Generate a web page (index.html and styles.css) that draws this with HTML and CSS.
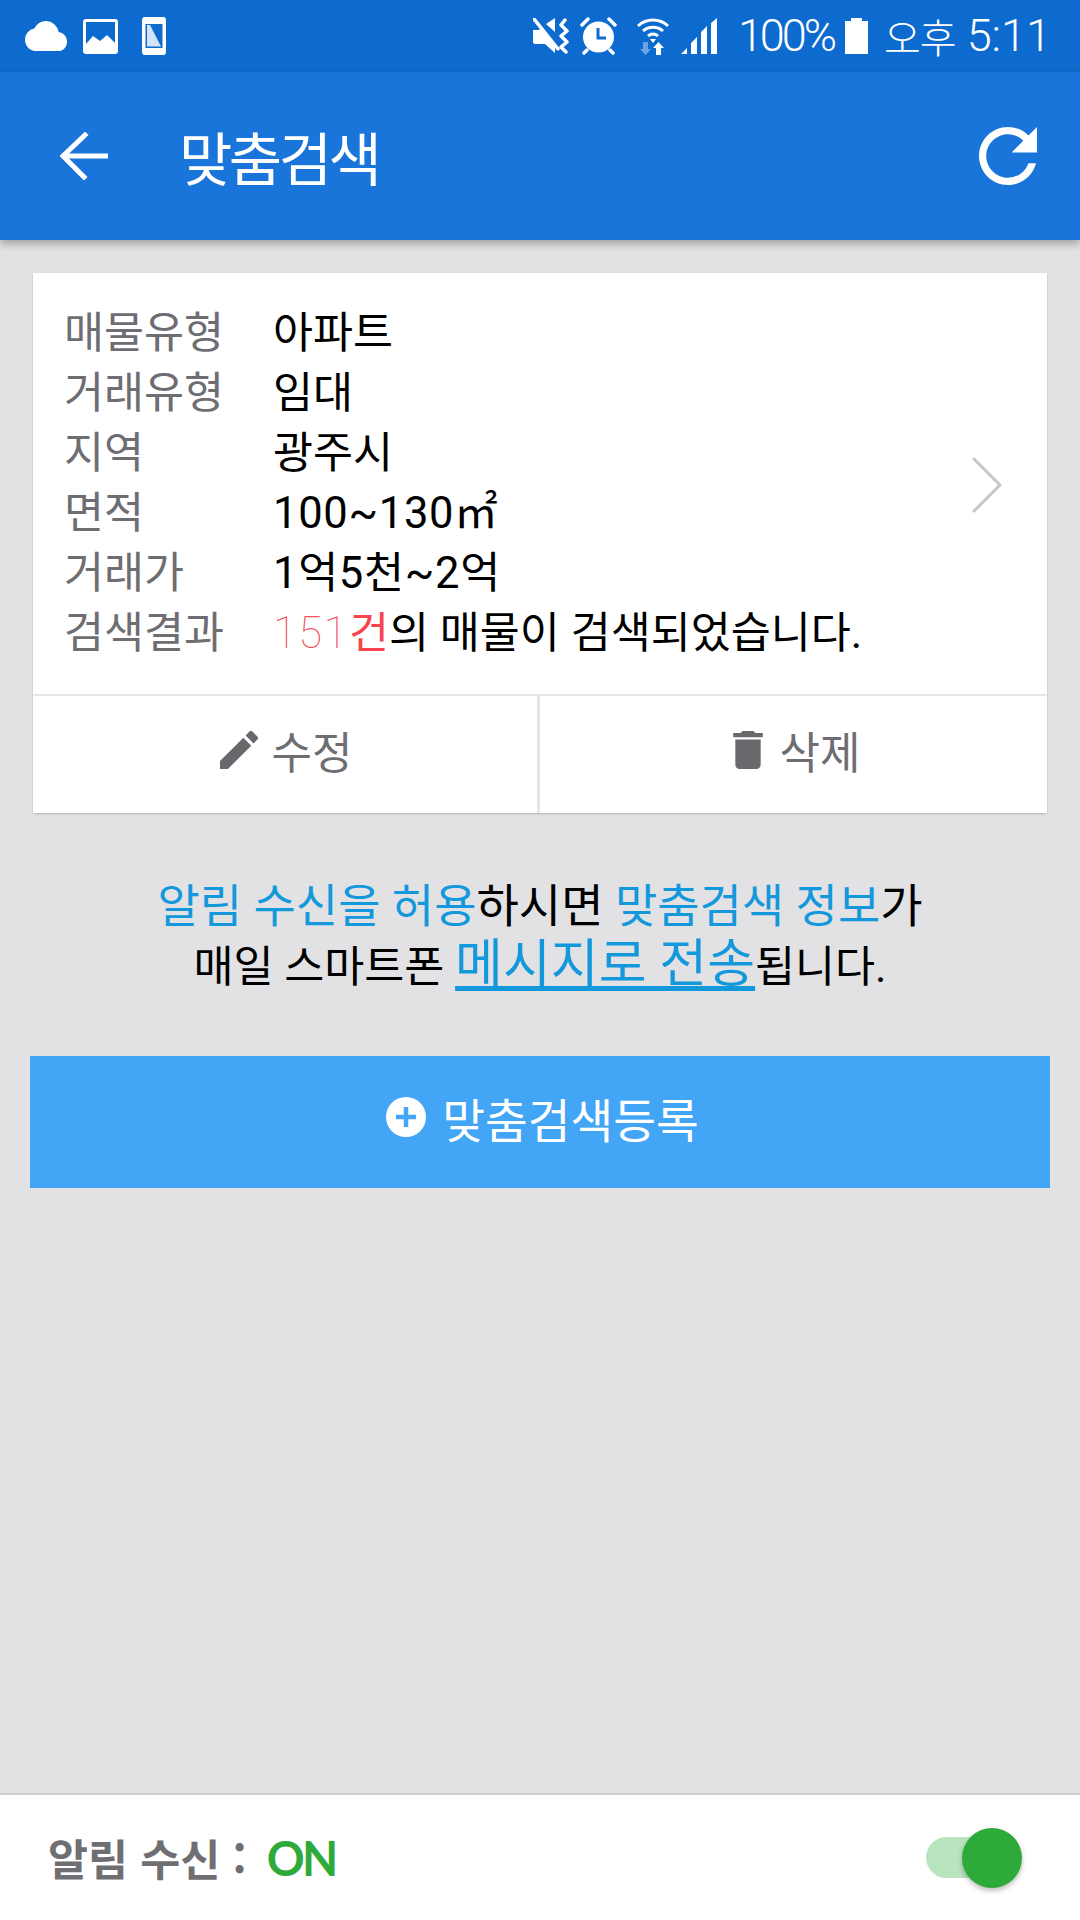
FILE: index.html
```html
<!DOCTYPE html>
<html lang="ko">
<head>
<meta charset="utf-8">
<title>맞춤검색</title>
<link rel="stylesheet" href="styles.css">
</head>
<body>
<div class="screen">
  <div class="status">
    <svg class="ic-cloud" viewBox="0 4 24 16" preserveAspectRatio="none"><path fill="#fff" d="M19.35 10.04A7.49 7.49 0 0 0 12 4C9.11 4 6.6 5.64 5.35 8.04A5.994 5.994 0 0 0 0 14c0 3.31 2.69 6 6 6h13c2.76 0 5-2.24 5-5 0-2.64-2.05-4.78-4.65-4.96z"/></svg>
    <svg class="ic-pic" viewBox="0 0 35 35"><rect width="35" height="35" rx="3" fill="#fff"/><rect x="3" y="3" width="29" height="22" fill="#0d6bcf"/><path fill="#fff" d="M3 25l7-8 7 5 7-6 8 8v6H3z"/></svg>
    <svg class="ic-phone" viewBox="0 0 24 38"><rect width="24" height="38" rx="3" fill="#fff"/><rect x="3.5" y="7" width="17" height="24" fill="#0d6bcf"/><path fill="#d3e4f8" d="M5 8h3l11 21.500H5z"/></svg>
    <span class="status-spacer"></span>
    <svg class="ic-mute" viewBox="0 0 37 36"><path fill="#fff" d="M0 12h6l2-2 14 16v9l-10-9H2a2 2 0 0 1-2-2zM13 6l9-6v14z"/><path fill="none" stroke="#fff" stroke-width="3.500" stroke-linecap="round" d="M1 1l24 30"/><path fill="none" stroke="#fff" stroke-width="3.500" stroke-linecap="round" stroke-linejoin="round" d="M32 2l-4 5 6 6-6 5 6 6-6 5 5 5"/></svg>
    <svg class="ic-alarm" viewBox="0 0 37 38"><circle cx="18.500" cy="20" r="15.500" fill="#fff"/><path fill="none" stroke="#0d6bcf" stroke-width="3" d="M18 11v10h8"/><path stroke="#fff" stroke-width="3.500" stroke-linecap="round" d="M2 8l6-6M35 8l-6-6M7 33l-3 3M30 33l3 3"/></svg>
    <svg class="ic-wifi" viewBox="0 0 32 38"><g fill="none" stroke="#fff" stroke-width="3"><path d="M1 9a22 22 0 0 1 30 0"/><path d="M6 14a15 15 0 0 1 20 0"/><path d="M11 19a7.500 7.500 0 0 1 10 0"/></g><path fill="#fff" d="M13 22h6l-3 4z"/><path fill="#6ba3e6" d="M6 25h5v7h3l-5.500 6L3 32h3z"/><path fill="#fff" d="M19 38v-7h-3l5.500-6 5.500 6h-3v7z"/></svg>
    <svg class="ic-signal" viewBox="0 0 36 36"><path fill="#fff" d="M0 36l6-6v6zM10 36V25l6-6v17zM20 36V14l6-6v28zM30 36V5l6-5v36z"/></svg>
    <span class="status-pct">100%</span>
    <svg class="ic-batt" viewBox="0 0 23 36"><path fill="#fff" d="M6 0h11v3h6v33H0V3h6z"/></svg>
    <span class="status-ampm">오후</span>
    <span class="status-time">5:11</span>
  </div>
  <header class="appbar">
    <svg class="ic-back" viewBox="0 0 48 48"><path fill="none" stroke="#fff" stroke-width="5" stroke-linecap="square" d="M46 24H4M25 3L3 24l21 21"/></svg>
    <h1 class="title">맞춤검색</h1>
    <svg class="ic-refresh" viewBox="4 4 16 16"><path fill="#fff" d="M17.65 6.35A7.958 7.958 0 0 0 12 4c-4.420 0-7.990 3.580-7.990 8s3.570 8 7.990 8c3.730 0 6.840-2.550 7.730-6h-2.080A5.990 5.990 0 0 1 12 18c-3.310 0-6-2.690-6-6s2.690-6 6-6c1.660 0 3.140.690 4.220 1.780L13 11h7V4l-2.350 2.350z"/></svg>
  </header>
  <main class="content">
    <section class="card">
      <div class="info">
        <div class="rows">
          <div class="row"><span class="label">매물유형</span><span class="value">아파트</span></div>
          <div class="row"><span class="label">거래유형</span><span class="value">임대</span></div>
          <div class="row"><span class="label">지역</span><span class="value">광주시</span></div>
          <div class="row"><span class="label">면적</span><span class="value num">100~130㎡</span></div>
          <div class="row"><span class="label">거래가</span><span class="value num">1억5천~2억</span></div>
          <div class="row"><span class="label">검색결과</span><span class="value"><span class="count">151</span><span class="count-unit">건</span>의 매물이 검색되었습니다.</span></div>
        </div>
        <svg class="ic-chevron" viewBox="0 0 30 56"><path fill="none" stroke="#c6c6c8" stroke-width="3" stroke-linecap="round" d="M2 2l26 26L2 54"/></svg>
      </div>
      <div class="actions">
        <div class="action action-edit">
          <svg class="ic-pencil" viewBox="3 3 18 18"><path fill="#69686c" d="M3 17.250V21h3.750L17.810 9.940l-3.750-3.750L3 17.250zM20.710 7.040a1 1 0 0 0 0-1.410l-2.340-2.340a1 1 0 0 0-1.410 0l-1.830 1.830 3.750 3.750 1.830-1.830z"/></svg>
          <span>수정</span>
        </div>
        <div class="action action-delete">
          <svg class="ic-trash" viewBox="5 3 14 18"><path fill="#69686c" d="M6 19c0 1.100.9 2 2 2h8c1.100 0 2-.9 2-2V7H6v12zM19 4h-3.500l-1-1h-5l-1 1H5v2h14V4z"/></svg>
          <span>삭제</span>
        </div>
      </div>
    </section>
    <p class="notice"><span class="hl">알림 수신을 허용</span>하시면 <span class="hl">맞춤검색 정보</span>가<br><span class="notice-second">매일 스마트폰 <span class="hl-big">메시지로 전송</span>됩니다.</span></p>
    <div class="add-btn">
      <svg class="ic-plus" viewBox="0 0 40 40"><circle cx="20" cy="20" r="20" fill="#fff"/><path stroke="#42a5f5" stroke-width="4.500" d="M20 10v20M10 20h20"/></svg>
      <span>맞춤검색등록</span>
    </div>
  </main>
  <footer class="bottom">
    <span class="bottom-label">알림 수신 :</span>
    <span class="bottom-on">ON</span>
    <span class="toggle"><span class="thumb"></span></span>
  </footer>
</div>
</body>
</html>
```
FILE: styles.css
```css
* { box-sizing: border-box; }
html, body { margin: 0; padding: 0; }
body { font-family: Roboto, "Noto Sans CJK KR", sans-serif; color: #000; background: #e2e2e4; }
svg { display: block; flex: none; }
.screen { width: 1080px; height: 1920px; display: flex; flex-direction: column; overflow: hidden; }

.status { height: 72px; background: #0d6bcf; display: flex; align-items: center; padding: 0 29px 0 25px; color: #fff; flex: none; }
.status-spacer { flex: 1; }
.ic-cloud { width: 42px; height: 30px; margin-right: 16px; }
.ic-pic { width: 35px; height: 35px; margin-right: 24px; }
.ic-phone { width: 24px; height: 38px; }
.ic-mute { width: 37px; height: 36px; margin-right: 10px; }
.ic-alarm { width: 37px; height: 38px; margin-right: 20px; }
.ic-wifi { width: 32px; height: 38px; margin-right: 12px; }
.ic-signal { width: 36px; height: 36px; margin-right: 21px; }
.status-pct { font-family: Roboto, sans-serif; font-weight: 300; font-size: 45px; line-height: 72px; letter-spacing: -3px; margin-right: 11px; }
.ic-batt { width: 23px; height: 36px; margin-right: 16px; }
.status-ampm { font-family: "Noto Sans CJK KR", sans-serif; font-weight: 300; font-size: 40px; line-height: 72px; letter-spacing: -1px; margin-right: 11px; }
.status-time { font-family: Roboto, sans-serif; font-weight: 300; font-size: 45px; line-height: 72px; letter-spacing: 0; }

.appbar { height: 168px; background: #1a75db; display: flex; align-items: center; padding: 0 43px 0 60px; box-shadow: 0 4px 8px rgba(0, 0, 0, .28); flex: none; position: relative; }
.ic-back { width: 48px; height: 48px; margin-right: 71px; }
.title { margin: 0; flex: 1; font-family: "Noto Sans CJK KR", sans-serif; font-weight: 400; font-size: 58px; line-height: 60px; color: #fff; letter-spacing: -3.500px; }
.ic-refresh { width: 58px; height: 58px; }

.content { flex: 1; padding: 33px 30px 0; display: flex; flex-direction: column; }
.card { margin: 0 3px; background: #fff; box-shadow: 0 1px 2px rgba(0, 0, 0, .2); }
.info { height: 421px; padding: 31px 45px 0 31px; display: flex; justify-content: space-between; align-items: center; }
.rows { align-self: flex-start; }
.row { display: flex; height: 60px; line-height: 60px; font-size: 43.500px; }
.label { width: 209px; color: #6e6d72; }
.value { color: #000; }
.num { letter-spacing: .7px; }
.count { color: #f4515a; font-weight: 100; letter-spacing: 1.500px; }
.count-unit { color: #f8444e; }
.ic-chevron { width: 30px; height: 56px; margin-bottom: 28px; }

.actions { display: flex; height: 119px; border-top: 2px solid #e6e6e8; }
.action { flex: 1; display: flex; align-items: center; justify-content: center; gap: 16px; font-size: 44px; color: #6e6d72; padding-bottom: 10px; }
.action-edit { flex: none; width: 507px; border-right: 3px solid #e6e6e8; gap: 14px; padding-left: 2px; }
.action-delete { gap: 17px; padding-left: 6px; }
.ic-pencil { width: 38px; height: 38px; }
.ic-trash { width: 30px; height: 38px; }

.notice { margin: 63px 0 58px; text-align: center; font-size: 46px; line-height: 60px; }
.notice-second { font-size: 43.500px; }
.hl { color: #1398dc; }
.hl-big { color: #1398dc; font-size: 52px; line-height: 1; text-decoration: underline; text-underline-offset: 4px; }

.add-btn { height: 132px; background: #42a5f5; color: #fff; display: flex; align-items: center; justify-content: center; gap: 16px; font-size: 46.500px; font-family: "Noto Sans CJK KR", sans-serif; padding: 0 0 10px 5px; }
.ic-plus { width: 40px; height: 40px; }

.bottom { height: 127px; background: #fff; border-top: 2px solid #cfcfd1; display: flex; align-items: center; padding: 0 0 0 48px; flex: none; }
.bottom-label { font-family: "Noto Sans CJK KR", sans-serif; font-weight: 700; font-size: 43.500px; color: #6f6e72; margin-right: 20px; }
.bottom-on { font-family: Lato, sans-serif; font-weight: 700; font-size: 47px; letter-spacing: -2.500px; color: #2eaa3a; flex: 1; }
.toggle { width: 84px; height: 41px; border-radius: 21px; background: #b8e4be; margin-right: 70px; display: flex; align-items: center; justify-content: flex-end; }
.thumb { width: 60px; height: 60px; border-radius: 50%; background: #2eaa3a; box-shadow: 0 3px 5px rgba(0, 0, 0, .25); flex: none; margin-right: -12px; }
```
